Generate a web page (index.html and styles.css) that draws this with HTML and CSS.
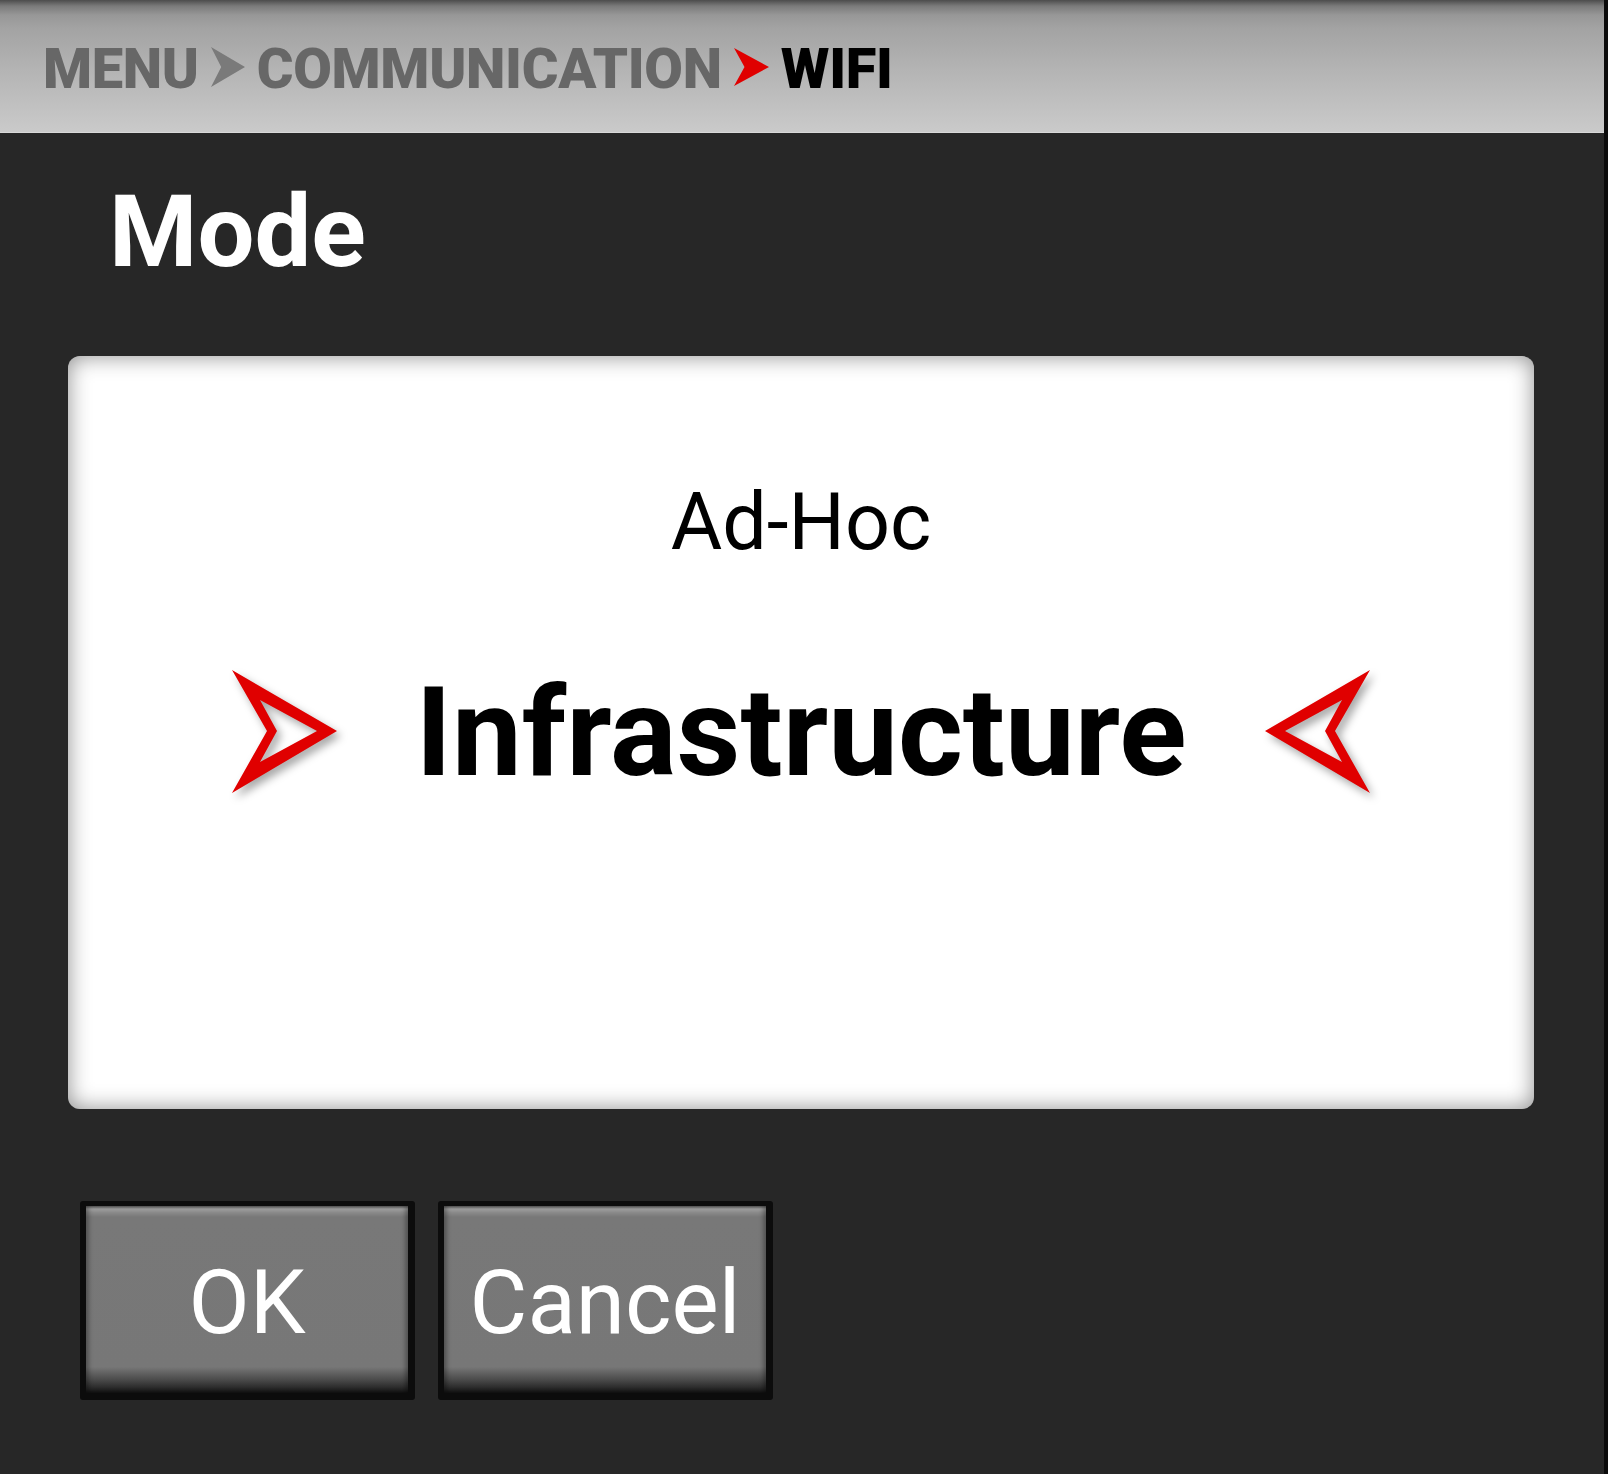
FILE: index.html
```html
<!DOCTYPE html>
<html>
<head>
    <title>Communication - WIFI Mode</title>
    <meta name="viewport" content="width=device-width, initial-scale=1.0">
    <link rel="stylesheet" href="styles.css">
</head>
<body>
    <div class="screen">
        <header class="topbar">
            <nav class="crumbs">
                <span class="crumb">MENU</span>
                <svg class="sep" viewBox="0 0 20 40" preserveAspectRatio="none"><polygon points="0,0 20,20 0,40 6,20"/></svg>
                <span class="crumb">COMMUNICATION</span>
                <svg class="sep active" viewBox="0 0 20 40" preserveAspectRatio="none"><polygon points="0,1 20,20 0,39 6,20"/></svg>
                <span class="crumb current">WIFI</span>
            </nav>
        </header>

        <main class="content">
            <h1 class="title">Mode</h1>

            <section class="picker">
                <div class="option">Ad-Hoc</div>
                <div class="option-row">
                    <svg class="pointer" viewBox="0 0 106 124" width="106" height="124">
                        <path fill-rule="evenodd" d="M0 0 L105 61 L0 123 L35 61 Z M28 30 L45 61 L28 92 L85 61 Z"/>
                    </svg>
                    <div class="option selected">Infrastructure</div>
                    <svg class="pointer" viewBox="0 0 106 124" width="106" height="124">
                        <path fill-rule="evenodd" d="M106 0 L1 61 L106 123 L71 61 Z M78 30 L61 61 L78 92 L21 61 Z"/>
                    </svg>
                </div>
            </section>

            <div class="actions">
                <button class="btn"><span class="btn-face"><span class="btn-label">OK</span></span></button>
                <button class="btn"><span class="btn-face"><span class="btn-label">Cancel</span></span></button>
            </div>
        </main>
    </div>
</body>
</html>
```

FILE: styles.css
```css
:root {
    --panel: #272727;
    --crumb: #676767;
    --red: #e00000;
}

* {
    box-sizing: border-box;
}

body {
    margin: 0;
    background: #0b0b0b;
    font-family: Roboto, "Noto Sans", sans-serif;
}

.screen {
    width: 1604px;
    min-height: 1474px;
    background: var(--panel);
}

/* breadcrumb bar */
.topbar {
    height: 133px;
    border-bottom: 1px solid #d8d8d8;
    background: linear-gradient(to bottom, #4c4c4c 0, #7a7a7a 6px, #979797 15px, #a3a3a3 28px, #b4b4b4 70px, #cacaca 100%);
    padding: 41px 0 0 43px;
}

.crumbs {
    display: flex;
    align-items: flex-start;
}

.crumb {
    font-size: 56px;
    line-height: 56px;
    font-weight: 900;
    letter-spacing: -0.3px;
    color: var(--crumb);
    white-space: nowrap;
}

.crumb.current {
    color: #000;
}

.sep {
    width: 34px;
    height: 40px;
    margin: 6px 12px 0 12px;
    fill: #7a7a7a;
}

.sep.active {
    width: 35px;
    fill: var(--red);
}

/* main area */
.content {
    padding: 48px 70px 0 68px;
}

.title {
    margin: 0 0 0 41px;
    font-size: 101px;
    line-height: 102px;
    font-weight: 700;
    color: #fff;
}

.picker {
    margin-top: 73px;
    width: 1466px;
    height: 753px;
    background: #fff;
    border-radius: 12px;
    box-shadow: inset 0 0 22px rgba(0, 0, 0, 0.45);
    padding-top: 127px;
    display: flex;
    flex-direction: column;
    align-items: center;
}

.option {
    font-size: 79px;
    line-height: 79px;
    color: #000;
}

.option-row {
    margin-top: 108px;
    display: flex;
    align-items: center;
    gap: 78px;
}

.option.selected {
    font-size: 124.5px;
    line-height: 124px;
    font-weight: 700;
}

.pointer {
    fill: var(--red);
    filter: drop-shadow(4px 5px 4px rgba(0, 0, 0, 0.35));
}

/* buttons */
.actions {
    margin: 92px 0 0 12px;
    display: flex;
    gap: 23px;
}

.btn {
    width: 335px;
    height: 199px;
    padding: 5px 7px 7px 6px;
    border: none;
    border-radius: 3px;
    background: #0c0c0c;
    font-family: inherit;
    cursor: pointer;
}

.btn-face {
    display: flex;
    align-items: center;
    justify-content: center;
    height: 100%;
    background: linear-gradient(to bottom, #6a6a6a 0, #a2a2a2 3px, #8c8c8c 6px, #787878 11px, #777 86%, #4a4a4a 93%, #151515 100%);
    box-shadow: inset 3px 0 4px rgba(0, 0, 0, 0.3), inset -3px 0 4px rgba(0, 0, 0, 0.3);
}

.btn-label {
    display: inline-block;
    font-size: 89px;
    line-height: 90px;
    color: #fff;
    margin-top: 6px;
}
```
